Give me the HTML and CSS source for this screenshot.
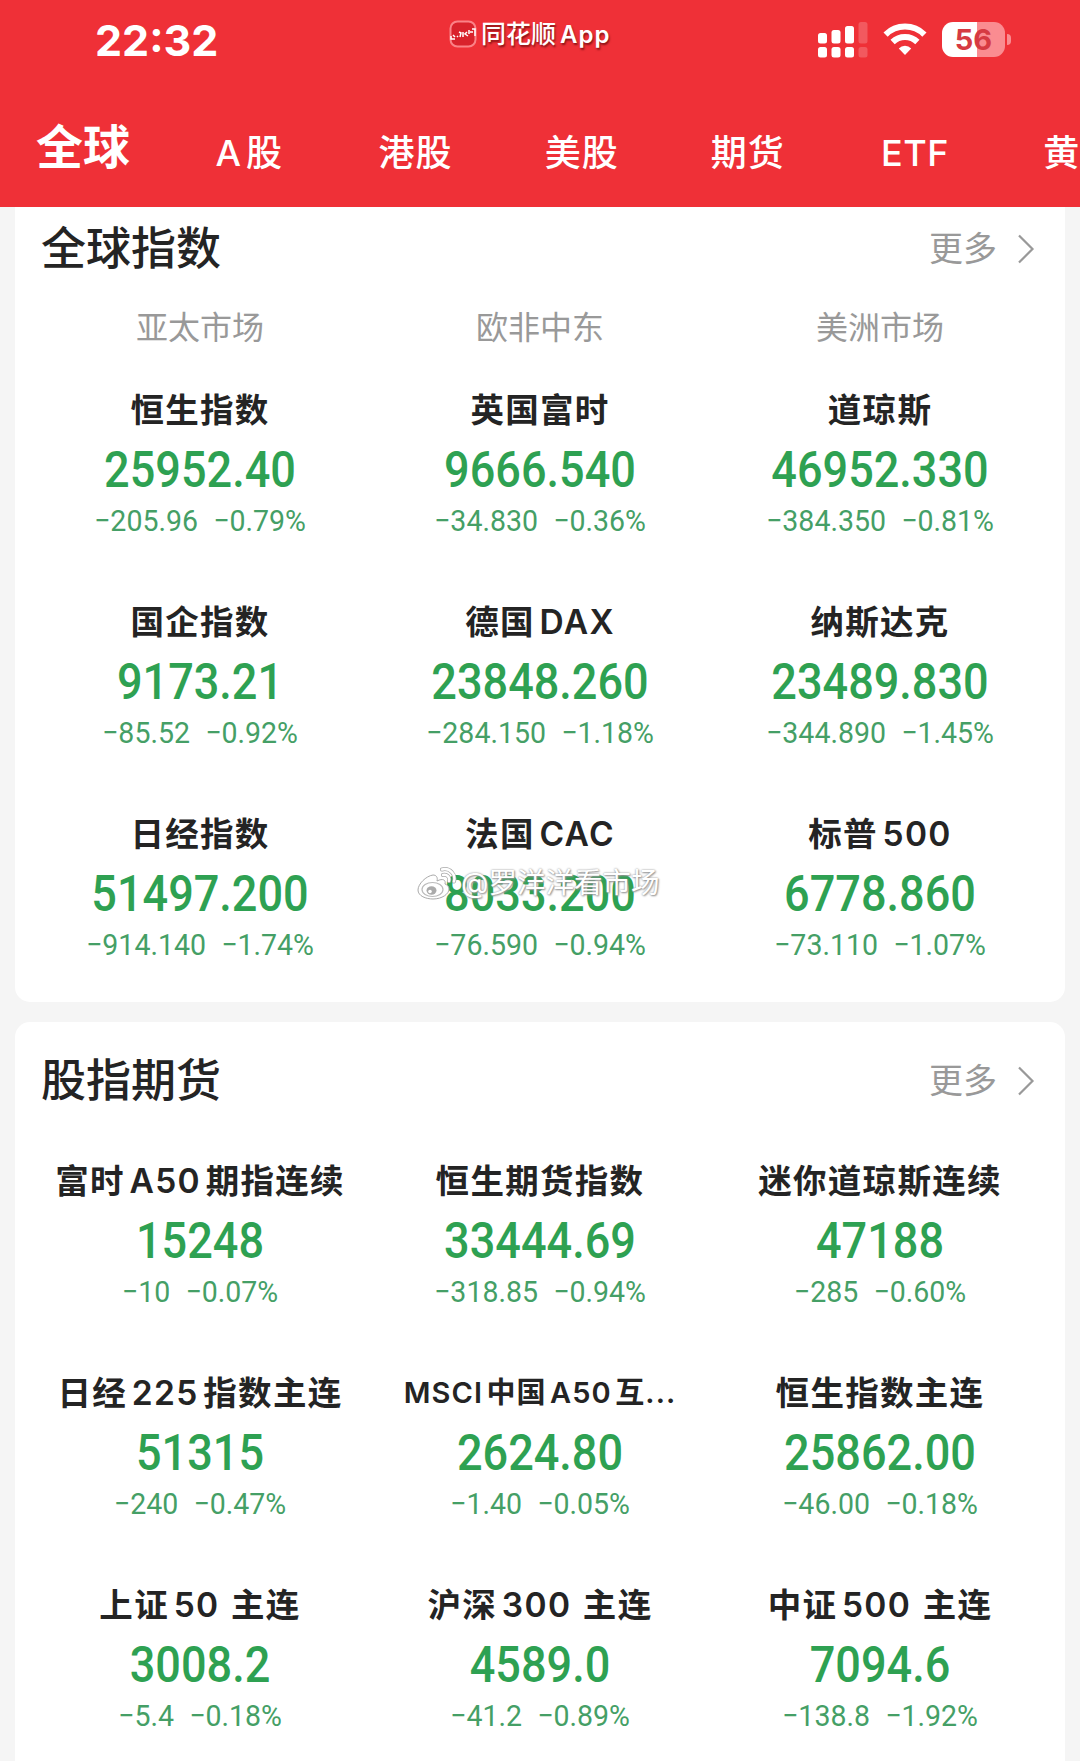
FILE: index.html
```html
<!DOCTYPE html>
<html lang="zh-CN">
<head>
    <meta charset="UTF-8">
    <meta name="viewport" content="width=device-width, initial-scale=1.0">
    <title>全球</title>
    <link rel="stylesheet" href="styles.css">
</head>
<body>
    <header class="header">
        <div class="status-bar">
            <span class="time">22:32</span>
            <div class="app-name">
                <svg class="app-logo" width="28" height="28" viewBox="0 0 28 28">
                    <rect x="1.5" y="1.5" width="25" height="25" rx="7" fill="#d9222c" stroke="#fb8287" stroke-width="2"/>
                    <path d="M2 16v3h4M4 15l2 2M8 17l1-1M10 12l2 1-1 4M14 12v5M18 12l-2 2 3 2M20 10v4M23 9h3v7M21 12h3" fill="none" stroke="#fff" stroke-width="1.5"/>
                </svg>
                <span>同花顺<span class="app-latin">App</span></span>
            </div>
            <div class="status-icons">
                <svg class="signal" width="50" height="36" viewBox="0 0 50 36" fill="#fff">
                    <rect x="0" y="11" width="9" height="10.5" rx="2.5"/>
                    <rect x="13.5" y="8" width="9" height="13.5" rx="2.5"/>
                    <rect x="27" y="4" width="9" height="17.5" rx="2.5"/>
                    <rect x="40.5" y="0" width="9" height="21.5" rx="2.5" opacity=".2"/>
                    <rect x="0" y="25" width="9" height="10.5" rx="2.5"/>
                    <rect x="13.5" y="25" width="9" height="10.5" rx="2.5"/>
                    <rect x="27" y="25" width="9" height="10.5" rx="2.5"/>
                    <rect x="40.5" y="25" width="9" height="10.5" rx="2.5" opacity=".2"/>
                </svg>
                <svg class="wifi" width="44" height="32" viewBox="0 0 44 32" fill="none" stroke="#fff" stroke-width="6">
                    <path d="M2.600 11.600a27.500 27.500 0 0 1 38.800 0"/>
                    <path d="M9.600 19a17.600 17.600 0 0 1 24.800 0"/>
                    <path d="M22 32l-6.200-6.600a8.800 8.800 0 0 1 12.400 0z" fill="#fff" stroke="none"/>
                </svg>
                <div class="battery">
                    <div class="battery-body"><span>56</span></div>
                    <div class="battery-cap"></div>
                </div>
            </div>
        </div>
        <nav class="tabs">
            <a class="tab active">全球</a>
            <a class="tab"><span class="latin">A</span>股</a>
            <a class="tab">港股</a>
            <a class="tab">美股</a>
            <a class="tab">期货</a>
            <a class="tab etf">ETF</a>
            <a class="tab">黄金</a>
        </nav>
    </header>

    <section class="card card-global">
        <div class="card-title">
            <h2>全球指数</h2>
            <a class="more">更多
                <svg width="18" height="30" viewBox="0 0 18 30"><path d="M2 1.5L15.5 15 2 28.5" fill="none" stroke="#999" stroke-width="2.2"/></svg>
            </a>
        </div>
        <div class="markets">
            <span>亚太市场</span>
            <span>欧非中东</span>
            <span>美洲市场</span>
        </div>
        <div class="grid">
            <div class="item">
                <div class="name">恒生指数</div>
                <div class="price">25952.40</div>
                <div class="change"><span>−205.96</span><span>−0.79%</span></div>
            </div>
            <div class="item">
                <div class="name">英国富时</div>
                <div class="price">9666.540</div>
                <div class="change"><span>−34.830</span><span>−0.36%</span></div>
            </div>
            <div class="item">
                <div class="name">道琼斯</div>
                <div class="price">46952.330</div>
                <div class="change"><span>−384.350</span><span>−0.81%</span></div>
            </div>
            <div class="item">
                <div class="name">国企指数</div>
                <div class="price">9173.21</div>
                <div class="change"><span>−85.52</span><span>−0.92%</span></div>
            </div>
            <div class="item">
                <div class="name">德国 DAX</div>
                <div class="price">23848.260</div>
                <div class="change"><span>−284.150</span><span>−1.18%</span></div>
            </div>
            <div class="item">
                <div class="name">纳斯达克</div>
                <div class="price">23489.830</div>
                <div class="change"><span>−344.890</span><span>−1.45%</span></div>
            </div>
            <div class="item">
                <div class="name">日经指数</div>
                <div class="price">51497.200</div>
                <div class="change"><span>−914.140</span><span>−1.74%</span></div>
            </div>
            <div class="item">
                <div class="name">法国 CAC</div>
                <div class="price">8033.200</div>
                <div class="change"><span>−76.590</span><span>−0.94%</span></div>
                <!-- watermark over the price -->
                <div class="watermark">
                    <svg width="40" height="34" viewBox="0 0 40 34">
                        <path d="M16 9c-7 1-15 9-15 15 0 6 8 9 15 9 9 0 16-5 16-10 0-3-2-4-4-5 1-4-2-6-8-3 1-4-1-6-4-6z" fill="#fff" stroke="#aaa" stroke-width="1"/>
                        <ellipse cx="15.5" cy="23.5" rx="10.5" ry="7" fill="#fff" stroke="#bbb" stroke-width="1.2"/>
                        <ellipse cx="14.5" cy="24.5" rx="5" ry="4.2" fill="#aaa"/>
                        <circle cx="13" cy="25.5" r="1.8" fill="#fff"/>
                        <path d="M26 9c4-1 7 2 6 6M25 3.5c8-2 14 5 12 12" fill="none" stroke="#aaa" stroke-width="4" stroke-linecap="round"/>
                        <path d="M26 9c4-1 7 2 6 6M25 3.5c8-2 14 5 12 12" fill="none" stroke="#fff" stroke-width="2.5" stroke-linecap="round"/>
                    </svg>
                    <span>@罗洋洋看市场</span>
                </div>
            </div>
            <div class="item">
                <div class="name">标普 500</div>
                <div class="price">6778.860</div>
                <div class="change"><span>−73.110</span><span>−1.07%</span></div>
            </div>
        </div>
    </section>

    <section class="card card-futures">
        <div class="card-title">
            <h2>股指期货</h2>
            <a class="more">更多
                <svg width="18" height="30" viewBox="0 0 18 30"><path d="M2 1.5L15.5 15 2 28.5" fill="none" stroke="#999" stroke-width="2.2"/></svg>
            </a>
        </div>
        <div class="grid">
            <div class="item">
                <div class="name">富时 A50 期指连续</div>
                <div class="price">15248</div>
                <div class="change"><span>−10</span><span>−0.07%</span></div>
            </div>
            <div class="item">
                <div class="name">恒生期货指数</div>
                <div class="price">33444.69</div>
                <div class="change"><span>−318.85</span><span>−0.94%</span></div>
            </div>
            <div class="item">
                <div class="name">迷你道琼斯连续</div>
                <div class="price">47188</div>
                <div class="change"><span>−285</span><span>−0.60%</span></div>
            </div>
            <div class="item">
                <div class="name">日经 225 指数主连</div>
                <div class="price">51315</div>
                <div class="change"><span>−240</span><span>−0.47%</span></div>
            </div>
            <div class="item">
                <div class="name small">MSCI 中国 A50 互...</div>
                <div class="price">2624.80</div>
                <div class="change"><span>−1.40</span><span>−0.05%</span></div>
            </div>
            <div class="item">
                <div class="name">恒生指数主连</div>
                <div class="price">25862.00</div>
                <div class="change"><span>−46.00</span><span>−0.18%</span></div>
            </div>
            <div class="item">
                <div class="name">上证 50 &thinsp;主连</div>
                <div class="price">3008.2</div>
                <div class="change"><span>−5.4</span><span>−0.18%</span></div>
            </div>
            <div class="item">
                <div class="name">沪深 300 &thinsp;主连</div>
                <div class="price">4589.0</div>
                <div class="change"><span>−41.2</span><span>−0.89%</span></div>
            </div>
            <div class="item">
                <div class="name">中证 500 &thinsp;主连</div>
                <div class="price">7094.6</div>
                <div class="change"><span>−138.8</span><span>−1.92%</span></div>
            </div>
        </div>
    </section>
</body>
</html>
```
FILE: styles.css
```css
* {
    box-sizing: border-box;
}

body {
    margin: 0;
    height: 1761px;
    overflow: hidden;
    background-color: #f5f5f5;
    color: #242424;
    font-family: Inter, "Noto Sans CJK SC", sans-serif;
}

.header {
    height: 207px;
    background-color: #ef3037;
    color: #fff;
    overflow: hidden;
}

.status-bar {
    display: grid;
    grid-template-columns: 449px 1fr 262px;
    height: 106px;
}

.time {
    padding: 15px 0 0 95px;
    font-size: 43px;
    font-weight: 700;
    line-height: 50px;
}

.app-name {
    display: flex;
    align-items: center;
    gap: 4px;
    height: 30px;
    margin-top: 19px;
    font-size: 25px;
    font-weight: 500;
    line-height: 30px;
    text-shadow: 1px 2px 2px rgba(70, 0, 0, 0.6);
}

.app-latin {
    margin-left: 4px;
    font-size: 24px;
    font-weight: 600;
    letter-spacing: 1px;
}

.status-icons {
    display: flex;
    align-items: flex-start;
    padding-top: 22px;
}

.wifi {
    margin: 1px 0 0 15px;
}

.battery {
    display: flex;
    align-items: center;
    gap: 2px;
    margin-left: 15px;
}

.battery-body {
    width: 63px;
    height: 35px;
    border-radius: 11px;
    background: linear-gradient(to right, #fff 56%, #fa8c91 56%);
    color: #d63a42;
    font-size: 29px;
    font-weight: 700;
    line-height: 36px;
    text-align: center;
}

.battery-cap {
    width: 4px;
    height: 11px;
    border-radius: 0 4px 4px 0;
    background-color: #fa8c91;
}

.tabs {
    display: flex;
    height: 94px;
}

.tab {
    flex: 0 0 166.2px;
    font-size: 36px;
    font-weight: 500;
    letter-spacing: 1px;
    line-height: 95px;
    text-align: center;
    white-space: nowrap;
}

.tab.active {
    font-size: 47px;
    font-weight: 700;
    letter-spacing: 0;
    line-height: 81px;
}

.tab.etf {
    padding-left: 2px;
    letter-spacing: 0.5px;
}

.latin {
    margin-right: 4px;
}

.card {
    margin: 0 15px;
    padding: 0 15px;
    background-color: #fff;
    border-radius: 15px;
}

.card-global {
    height: 795px;
    border-radius: 0 0 15px 15px;
}

.card-futures {
    height: 800px;
    margin-top: 20px;
}

.card-title {
    display: flex;
    align-items: center;
    justify-content: space-between;
    height: 83px;
    padding: 0 15px 0 11px;
}

.card-futures .card-title {
    height: 117px;
}

h2 {
    margin: 0;
    font-size: 45px;
    font-weight: 500;
    line-height: 60px;
}

.more {
    display: flex;
    align-items: center;
    gap: 20px;
    color: #999;
    font-size: 34px;
    line-height: 40px;
}

.markets {
    display: grid;
    grid-template-columns: repeat(3, 1fr);
    color: #999;
    font-size: 32px;
    line-height: 76px;
    text-align: center;
}

.grid {
    display: grid;
    grid-template-columns: repeat(3, 340px);
    row-gap: 66px;
    padding-top: 22px;
}

.card-futures .grid {
    padding-top: 20px;
}

.item {
    position: relative;
    text-align: center;
    white-space: nowrap;
}

.name {
    font-size: 33.5px;
    font-weight: 600;
    letter-spacing: 1.3px;
    word-spacing: -5px;
    line-height: 44px;
}

.name.small {
    font-size: 29px;
    letter-spacing: 1.1px;
}

/* narrow digits */
.price,
.change {
    font-family: Roboto, sans-serif;
}

.price {
    color: #2ea152;
    font-size: 49.5px;
    font-weight: 500;
    line-height: 76px;
    transform: scaleX(0.91);
}

.change {
    display: flex;
    justify-content: center;
    gap: 16px;
    color: #459f66;
    font-size: 30px;
    line-height: 26px;
    transform: scaleX(0.95);
}

.watermark {
    position: absolute;
    top: 51px;
    left: 47px;
    display: flex;
    align-items: center;
    gap: 4px;
    color: #fff;
    font-size: 28.5px;
    line-height: 40px;
    text-shadow: 0 0 2px #888, 1px 1px 2px #999;
}
```
